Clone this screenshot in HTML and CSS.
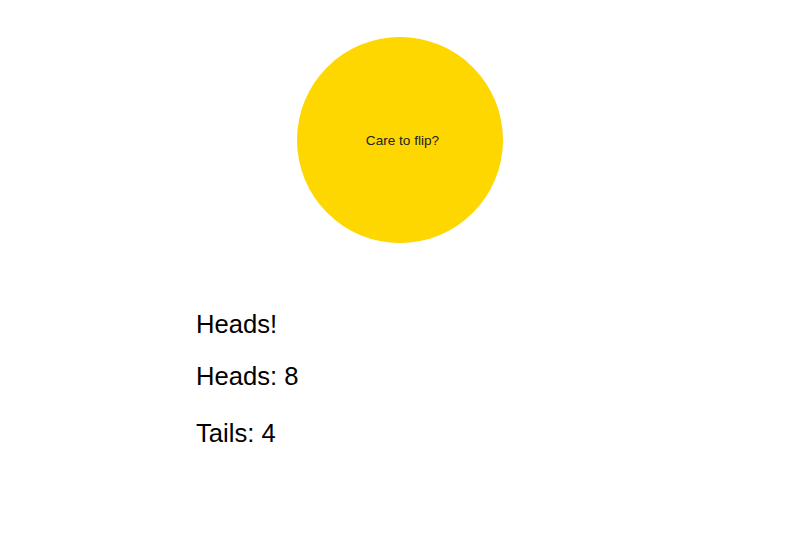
FILE: index.html
```html
<!DOCTYPE html>
<html>
<head>
<meta charset="utf-8">
<link rel="stylesheet" href="styles.css">
</head>
<body>
<main class="app">
  <div class="coin-wrap">
    <button class="coin">Care to flip?</button>
  </div>
  <section class="results">
    <p class="line line-result">Heads!</p>
    <p class="line line-heads">Heads: 8</p>
    <p class="line">Tails: 4</p>
  </section>
</main>
</body>
</html>
```

FILE: styles.css
```css
html, body {
  margin: 0;
  padding: 0;
  background: #fff;
}
.app {
  font-family: "Liberation Sans", Arial, sans-serif;
  color: #000;
}
.coin-wrap {
  display: flex;
  justify-content: center;
  padding-top: 37px;
}
.coin {
  width: 206px;
  height: 206px;
  border-radius: 50%;
  border: none;
  background: #ffd700;
  color: #222;
  font-family: "Liberation Sans", Arial, sans-serif;
  font-size: 13.6px;
  padding: 0 0 0 5px;
  margin: 0;
  cursor: pointer;
}
.results {
  padding-left: 196px;
  padding-top: 67px;
}
.line {
  font-size: 25.6px;
  line-height: 29.4px;
  margin: 0 0 25.6px 0;
}
.line-result {
  margin-bottom: 22.6px;
}
.line-heads {
  margin-bottom: 27.6px;
}
```
